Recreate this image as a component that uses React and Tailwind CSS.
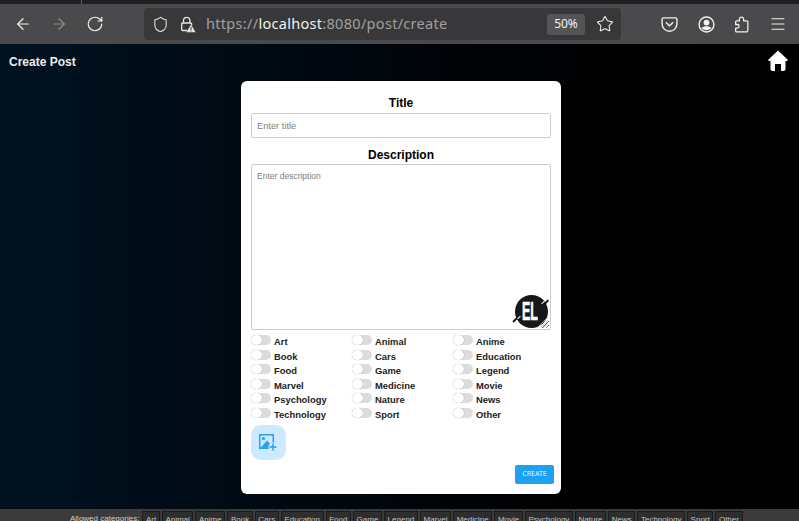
import React from 'react';
import { ArrowLeft, ArrowRight, RotateCw, Shield, Star, Menu } from 'lucide-react';

const CATEGORIES = [
  'Art', 'Animal', 'Anime', 'Book', 'Cars', 'Education', 'Food', 'Game', 'Legend',
  'Marvel', 'Medicine', 'Movie', 'Psychology', 'Nature', 'News', 'Technology', 'Sport', 'Other',
];

const LockWarning = () => (
  <svg width="16" height="17" viewBox="0 0 16 17" fill="none" className="text-[#e6e6e6]">
    <path d="M3.5 7V4.5a3.2 3.2 0 0 1 6.4 0V7" stroke="currentColor" strokeWidth="1.3" />
    <path d="M7 14.5H2.6a.9.9 0 0 1-.9-.9V7.9a.9.9 0 0 1 .9-.9h8.2a.9.9 0 0 1 .9.9v1" stroke="currentColor" strokeWidth="1.3" />
    <path d="M11 8.6l4.6 7.6H6.4z" fill="currentColor" />
    <rect x="10.5" y="11" width="1" height="3" fill="#3a3a3c" />
    <rect x="10.5" y="14.5" width="1" height="1" fill="#3a3a3c" />
  </svg>
);

const PocketIcon = () => (
  <svg width="17" height="17" viewBox="0 0 16 16" fill="none" stroke="#f2f2f2" strokeWidth="1.3">
    <path d="M2.2 1.8h11.6a1.2 1.2 0 0 1 1.2 1.2v4.4a7 7 0 0 1-14 0V3a1.2 1.2 0 0 1 1.2-1.2z" />
    <path d="M5 6.4l3 2.8 3-2.8" strokeLinecap="round" />
  </svg>
);

const AccountIcon = () => (
  <svg width="17" height="17" viewBox="0 0 16 16" fill="none">
    <circle cx="8" cy="8" r="7" stroke="#f2f2f2" strokeWidth="1.3" />
    <circle cx="8" cy="6.2" r="2.7" fill="#f2f2f2" />
    <path d="M3.4 11.4c1.2-1.3 2.8-1.8 4.6-1.8s3.4.5 4.6 1.8c-1.2 1.4-2.8 2-4.6 2s-3.4-.6-4.6-2z" fill="#f2f2f2" />
  </svg>
);

const PuzzleIcon = () => (
  <svg width="17" height="17" viewBox="0 0 16 16" fill="none" stroke="#f2f2f2" strokeWidth="1.2" strokeLinejoin="round">
    <path d="M3 15h9.5a1.5 1.5 0 0 0 1.5-1.5V5.5a1 1 0 0 0-1-1H10V3a2 2 0 0 0-4 0v1.5H3.5a1 1 0 0 0-1 1V8H4a1.6 1.6 0 0 1 0 3.4H2.5v2.1A1.5 1.5 0 0 0 3 15z" />
  </svg>
);

const HomeIcon = () => (
  <svg width="20" height="21" viewBox="0 0 20 21" fill="#fff">
    <path d="M10 .5l9.5 9a.8.8 0 0 1-.6 1.4h-1.4V19a2 2 0 0 1-2 2H13v-7H7v7H4.5a2 2 0 0 1-2-2v-8.1H1.1a.8.8 0 0 1-.6-1.4z" />
  </svg>
);

const AddImageIcon = () => (
  <svg width="19" height="18" viewBox="0 0 19 18" fill="none">
    <rect x=".75" y=".75" width="13.5" height="13.5" stroke="#2b9ff0" strokeWidth="1.5" />
    <circle cx="4.5" cy="4.5" r="1.6" fill="#2b9ff0" />
    <path d="M1 14.5L8 6.5l6 6v2z" fill="#2b9ff0" />
    <circle cx="14" cy="13" r="4.6" fill="#cce9fd" />
    <path d="M14 9.5v7M10.5 13h7" stroke="#2b9ff0" strokeWidth="1.5" />
  </svg>
);

const ElLogo = () => (
  <div className="absolute right-[3px] bottom-[2px] w-[33px] h-[33px] rounded-full bg-[#171717] flex items-center justify-center">
    <span className="text-white font-bold text-[25px] leading-none scale-x-[.5] ml-[-3px] [-webkit-text-stroke:0.6px_white]">EL</span>
    <span className="absolute -left-[3px] bottom-[8px] w-[6px] h-[1.5px] bg-[#171717] -rotate-45" />
    <span className="absolute left-[2px] bottom-[10px] w-[4px] h-[1px] bg-white -rotate-45" />
    <span className="absolute -right-[1px] top-[6px] w-[5px] h-[1.5px] bg-[#171717] -rotate-45" />
    <span className="absolute right-[3px] top-[7px] w-[4px] h-[1px] bg-white -rotate-45" />
    <svg width="11" height="11" viewBox="0 0 11 11" className="absolute right-0 bottom-0" stroke="#bbb" strokeWidth="0.8">
      <path d="M0 11L11 0M3 11l8-8M6 11l5-5M9 11l2-2" />
    </svg>
  </div>
);

const Toggle = ({ label }) => (
  <label className="flex items-start h-[14.5px]">
    <span className="relative w-[20px] h-[10px] mt-[-1px] rounded-full bg-[#dcdcdc] shrink-0">
      <span className="absolute left-0 top-0 w-[11px] h-[10px] rounded-full bg-white shadow-[0_0_1px_rgba(0,0,0,0.35)]" />
    </span>
    <span className="ml-[3px] text-[9.4px] leading-[12px] font-bold text-[#222]">{label}</span>
  </label>
);

const App = () => {
  return (
    <div className="flex flex-col w-[799px] h-[521px] overflow-hidden bg-black [font-family:'Liberation_Sans',Arial,sans-serif]">
      {/* browser chrome */}
      <div className="h-[4px] bg-[#1f1e20] shrink-0 pl-[81px]">
        <div className="w-px h-full bg-[#5a5a5a]" />
      </div>
      <div className="h-[40px] bg-[#4a4a4c] flex items-center shrink-0 pl-[14px] [font-family:'Noto_Sans',sans-serif]">
        <ArrowLeft size={18} strokeWidth={1.6} className="text-[#f2f2f2]" />
        <ArrowRight size={18} strokeWidth={1.6} className="text-[#8c8c8c] ml-[18px]" />
        <RotateCw size={18} strokeWidth={1.6} className="text-[#f2f2f2] ml-[18px]" />
        <div className="ml-[40px] w-[477px] h-[32px] rounded-[4px] bg-[#38383a] flex items-center pl-[8px]">
          <Shield size={17} strokeWidth={1.5} className="text-[#e6e6e6]" />
          <span className="ml-[11px]"><LockWarning /></span>
          <span className="ml-[10px] text-[14.5px] text-[#a0a0a0] tracking-[0.3px]">
            https://<span className="text-[#f2f2f2]">localhost</span>:8080/post/create
          </span>
          <span className="ml-auto w-[38px] h-[21px] rounded-[3px] bg-[#545456] text-[#f2f2f2] text-[12px] flex items-center justify-center">50%</span>
          <Star size={18} strokeWidth={1.4} className="text-[#f2f2f2] ml-[11px] mr-[7px]" />
        </div>
        <div className="ml-[40px]"><PocketIcon /></div>
        <div className="ml-[20px]"><AccountIcon /></div>
        <div className="ml-[18px]"><PuzzleIcon /></div>
        <Menu size={18} strokeWidth={1.4} className="text-[#f2f2f2] ml-[19px]" />
      </div>

      {/* page */}
      <div className="relative flex-1 min-h-0 bg-gradient-to-r from-[#001220] via-[#00060c] to-black">
        <div className="flex justify-between pl-[9px] pr-[11px]">
          <h1 className="mt-[11px] text-[12px] leading-[14px] font-bold text-[#eeeeee]">Create Post</h1>
          <div className="mt-[6px]"><HomeIcon /></div>
        </div>
        <form className="absolute left-[241px] top-[37px] w-[320px] h-[413px] bg-white rounded-[6px] px-[10px] pt-[15px]">
          <h2 className="text-center text-[12px] leading-[14px] font-bold text-black">Title</h2>
          <input
            className="block w-full h-[25px] mt-[3px] px-[5px] border border-[#cccccc] rounded-[2px] text-[9.3px] placeholder:text-[#808080] outline-none"
            placeholder="Enter title"
          />
          <h2 className="mt-[10px] text-center text-[12px] leading-[14px] font-bold text-black">Description</h2>
          <div className="relative mt-[2px]">
            <textarea
              className="block w-full h-[166px] p-[5px] border border-[#cccccc] rounded-[2px] text-[8.5px] leading-[13px] placeholder:text-[#808080] outline-none"
              placeholder="Enter description"
            />
            <ElLogo />
          </div>
          <div className="grid grid-cols-[101px_101px_1fr] mt-[6px]">
            {CATEGORIES.map((c) => (
              <Toggle key={c} label={c} />
            ))}
          </div>
          <button type="button" className="mt-[2px] w-[35px] h-[35px] rounded-[10px] bg-[#cce9fd] flex items-center justify-center">
            <AddImageIcon />
          </button>
          <div className="flex justify-end mr-[-3px] mt-[5px]">
            <button type="button" className="w-[39px] h-[19px] rounded-[2px] bg-[#1da1f2] text-[#e8f5fe] text-[7px] [font-family:'Noto_Sans',sans-serif]">CREATE</button>
          </div>
        </form>
      </div>

      {/* allowed categories */}
      <div className="h-[12px] shrink-0 bg-[#3b3b3b] flex items-start pl-[70px] pt-[2px] gap-[2px] overflow-hidden">
        <span className="text-[8px] leading-[16px] text-[#d0d0d0] mr-[1px]">Allowed categories:</span>
        {CATEGORIES.map((c) => (
          <span key={c} className="px-[2.6px] h-[18px] text-[8px] leading-[15px] text-[#c4c4c4] bg-[#2e2e2e] border border-[#1c1c1c]">{c}</span>
        ))}
      </div>
    </div>
  );
};

export default App;
